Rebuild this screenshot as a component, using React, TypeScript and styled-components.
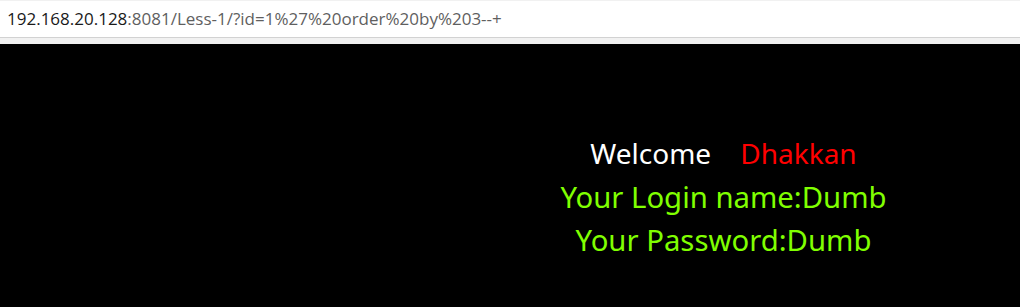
import React from "react";
import styled, { createGlobalStyle } from "styled-components";

const Global = createGlobalStyle`
  html, body { margin: 0; padding: 0; background: #000; }
  body { width: 1020px; height: 307px; overflow: hidden; }
`;

const Page = styled.div`
  display: flex;
  flex-direction: column;
  width: 1020px;
  height: 307px;
  background: #000;
`;

const AddressBar = styled.div`
  box-sizing: border-box;
  height: 38px;
  background: #fff;
  border-top: 1px solid #f1f1f1;
  border-bottom: 1px solid #d2d2d2;
  display: flex;
  align-items: center;
  padding-left: 7px;
  padding-bottom: 2px;
  font-family: "Open Sans", "Noto Sans", sans-serif;
  font-size: 17px;
`;

const Host = styled.span`
  color: #1a1a1a;
`;

const Rest = styled.span`
  color: #5f5f5f;
`;

const Strip = styled.div`
  height: 6px;
  background: #f1f1f1;
`;

const Content = styled.div`
  margin-left: 427px;
  padding-top: 88px;
  text-align: center;
  font-family: "Noto Sans", sans-serif;
  line-height: 43.5px;
`;

const Line = styled.div<{ $color: string; $size: number }>`
  color: ${(p) => p.$color};
  font-size: ${(p) => p.$size}px;
  white-space: pre;
`;

const Red = styled.span`
  color: #ff0000;
`;

export default function App() {
  return (
    <>
      <Global />
      <Page>
        <AddressBar>
          <Host>192.168.20.128</Host>
          <Rest>:8081/Less-1/?id=1%27%20order%20by%203--+</Rest>
        </AddressBar>
        <Strip />
        <Content>
          <Line $color="#ffffff" $size={28}>
            Welcome{"    "}
            <Red>Dhakkan</Red>
          </Line>
          <Line $color="#80ff00" $size={29.3}>Your Login name:Dumb</Line>
          <Line $color="#80ff00" $size={29.3}>Your Password:Dumb</Line>
        </Content>
      </Page>
    </>
  );
}
